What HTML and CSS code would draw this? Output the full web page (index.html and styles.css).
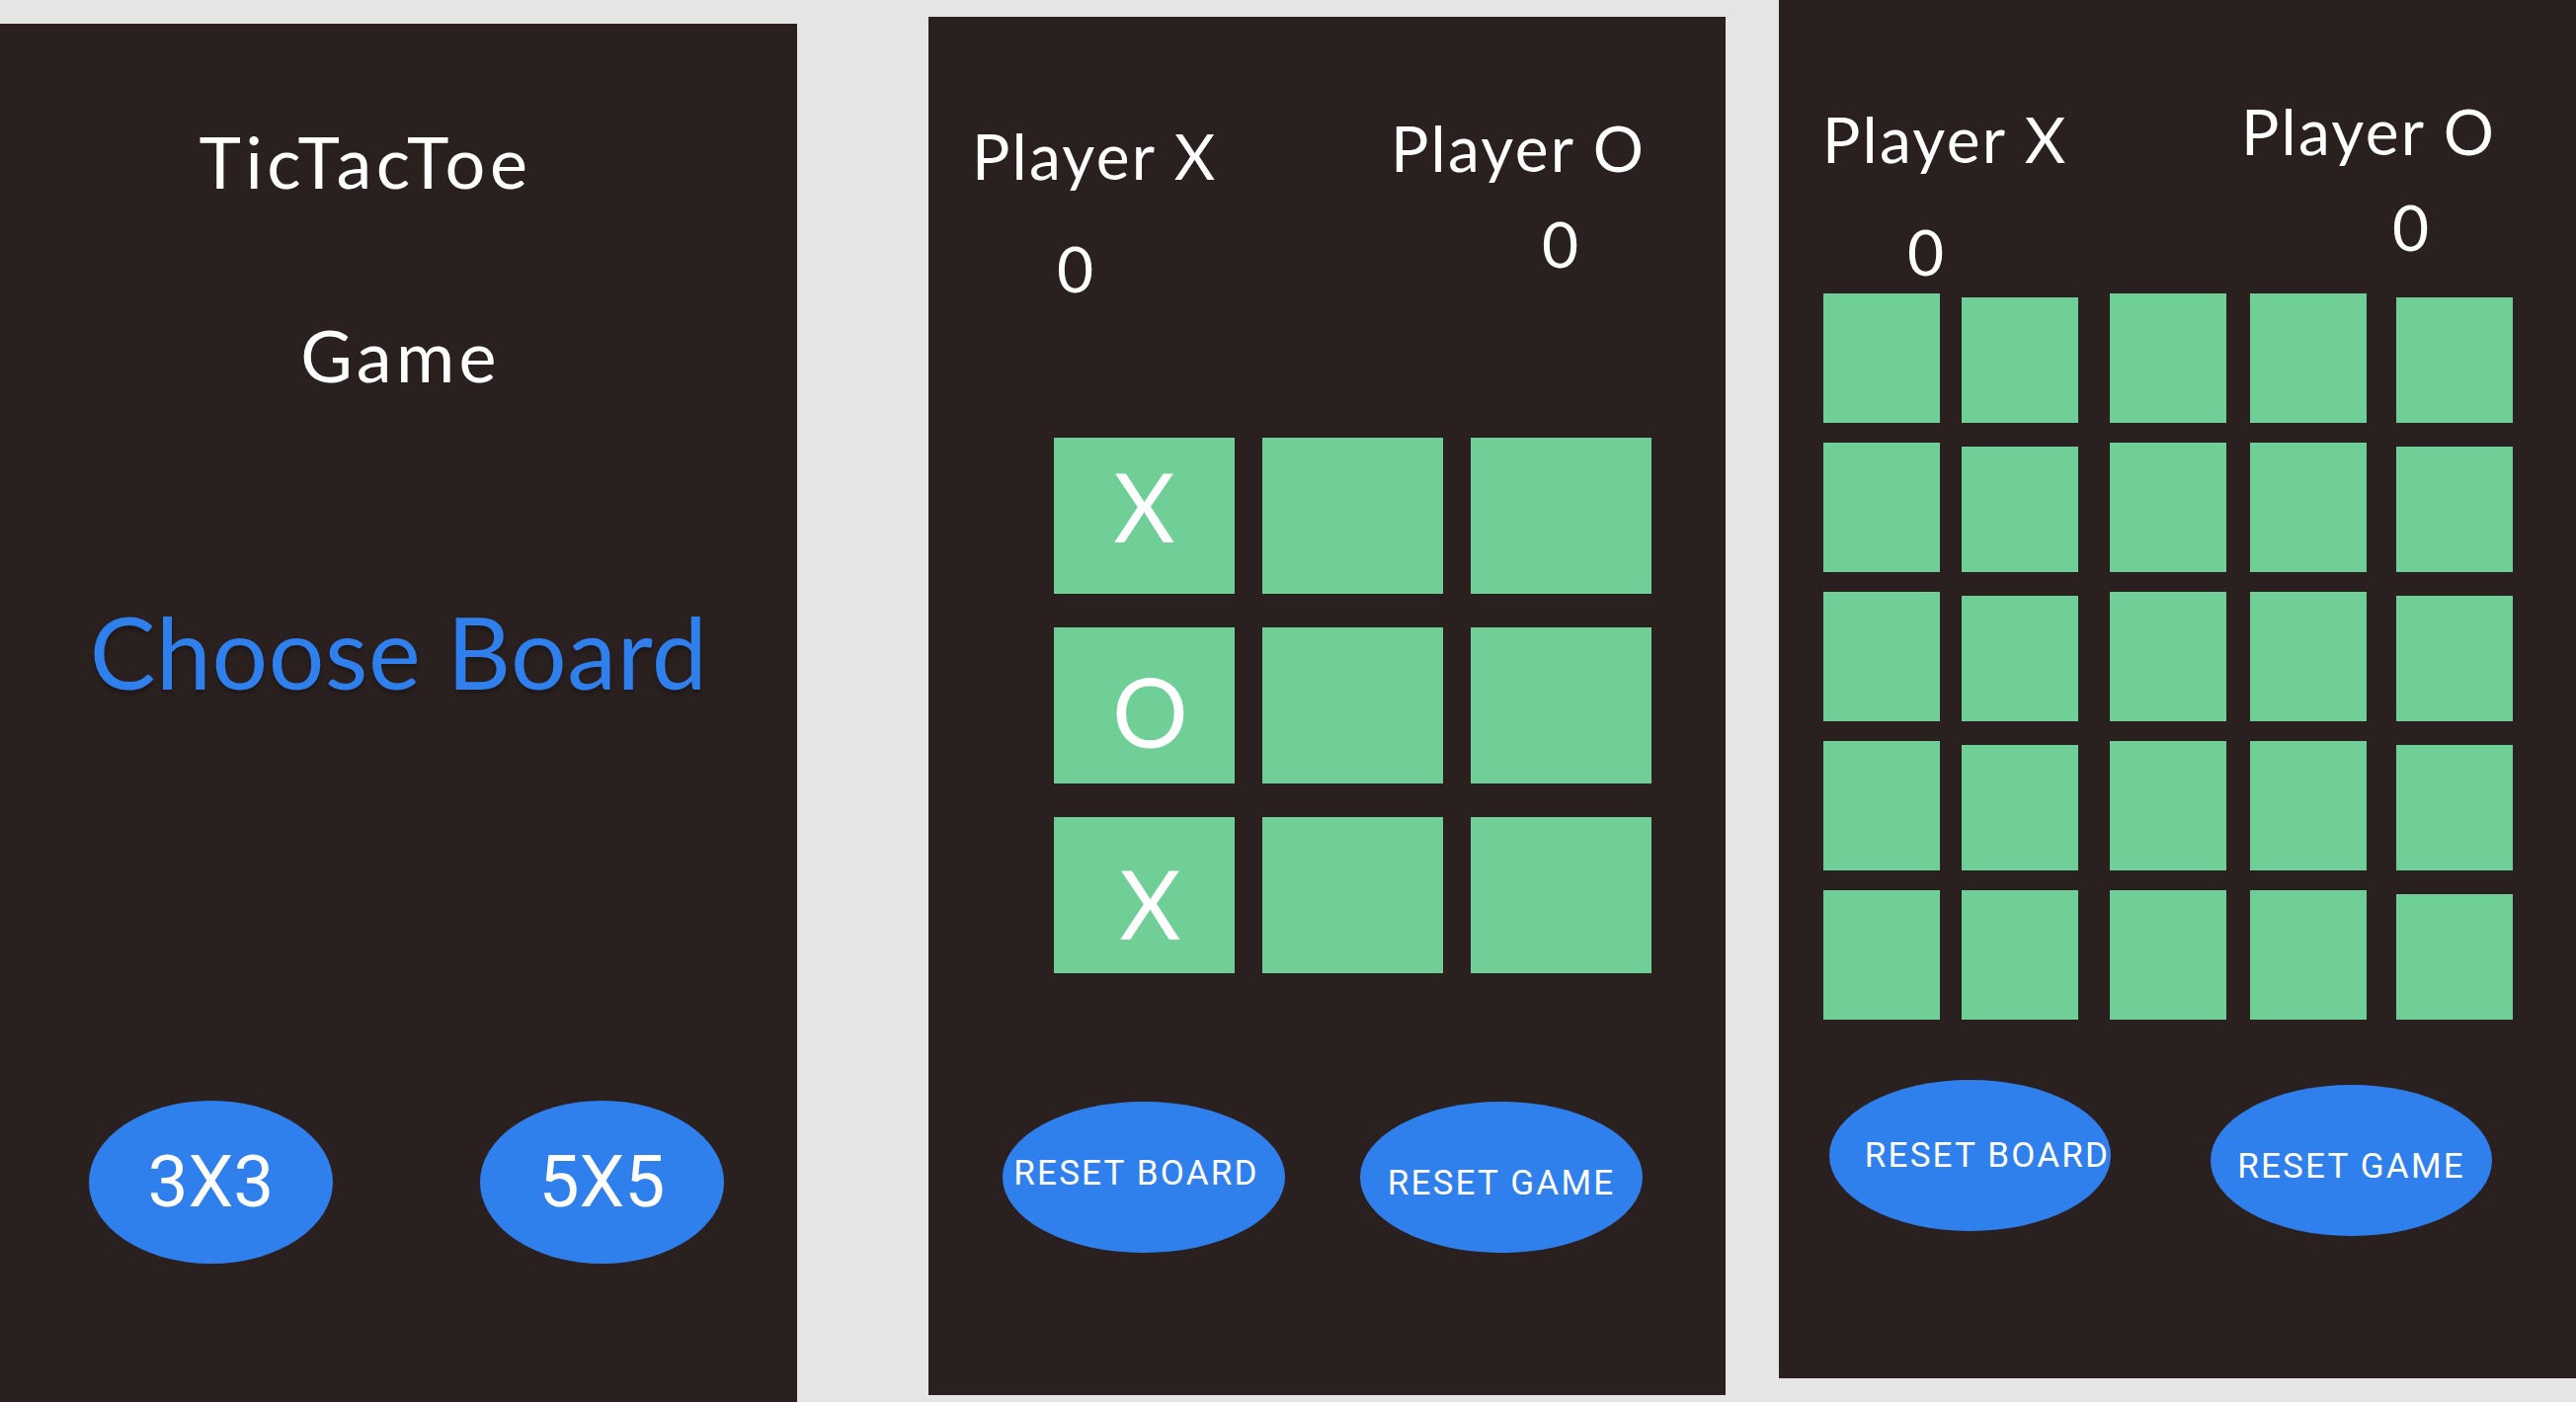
FILE: index.html
```html
<!DOCTYPE html>
<html lang="en">
<head>
<meta charset="utf-8">
<title>TicTacToe screens</title>
<link rel="stylesheet" href="styles.css">
</head>
<body>
<main class="screens">
  <section class="screen screen--menu">
    <h1 class="menu-title">TicTacToe</h1>
    <p class="menu-subtitle">Game</p>
    <h2 class="menu-choose">Choose Board</h2>
    <div class="menu-actions">
      <button class="pill pill--size">3X3</button>
      <button class="pill pill--size">5X5</button>
    </div>
  </section>

  <section class="screen screen--board3">
    <header class="scores">
      <div class="player player--x"><span class="player-name">Player X</span><span class="player-score">0</span></div>
      <div class="player player--o"><span class="player-name">Player O</span><span class="player-score">0</span></div>
    </header>
    <div class="grid grid--3">
      <div class="cell cell--mark-up">X</div>
      <div class="cell"></div>
      <div class="cell"></div>
      <div class="cell cell--mark-o">O</div>
      <div class="cell"></div>
      <div class="cell"></div>
      <div class="cell cell--mark-down">X</div>
      <div class="cell"></div>
      <div class="cell"></div>
    </div>
    <div class="actions actions--3">
      <button class="pill pill--reset label-left">RESET BOARD</button>
      <button class="pill pill--reset label-low">RESET GAME</button>
    </div>
  </section>

  <section class="screen screen--board5">
    <header class="scores">
      <div class="player player--x"><span class="player-name">Player X</span><span class="player-score">0</span></div>
      <div class="player player--o"><span class="player-name">Player O</span><span class="player-score">0</span></div>
    </header>
    <div class="grid grid--5">
      <div class="cell"></div><div class="cell cell--drop"></div><div class="cell"></div><div class="cell"></div><div class="cell cell--drop"></div>
      <div class="cell"></div><div class="cell cell--drop"></div><div class="cell"></div><div class="cell"></div><div class="cell cell--drop"></div>
      <div class="cell"></div><div class="cell cell--drop"></div><div class="cell"></div><div class="cell"></div><div class="cell cell--drop"></div>
      <div class="cell"></div><div class="cell cell--drop"></div><div class="cell"></div><div class="cell"></div><div class="cell cell--drop"></div>
      <div class="cell"></div><div class="cell"></div><div class="cell"></div><div class="cell"></div><div class="cell cell--drop"></div>
    </div>
    <div class="actions actions--5">
      <button class="pill pill--reset label-right">RESET BOARD</button>
      <button class="pill pill--reset pill--lower label-low">RESET GAME</button>
    </div>
  </section>
</main>
</body>
</html>
```

FILE: styles.css
```css
* { box-sizing: border-box; }

html, body { margin: 0; padding: 0; }

body {
  width: 2608px;
  height: 1419px;
  overflow: hidden;
  background: #e5e5e5;
  font-family: Lato, "Noto Sans", sans-serif;
}

.screens {
  display: flex;
  align-items: flex-start;
}

.screen {
  flex: none;
  width: 807px;
  height: 1395px;
  background: #2a2020;
  color: #ffffff;
  display: flex;
  flex-direction: column;
}

.screen--menu { margin-top: 24px; }
.screen--board3 { margin-top: 17px; margin-left: 133px; }
.screen--board5 { margin-top: 0; margin-left: 54px; }

/* ---------- menu screen ---------- */
.menu-title,
.menu-subtitle,
.menu-choose {
  margin: 0;
  font-weight: 400;
  line-height: 1;
  text-align: center;
  white-space: nowrap;
}

.menu-title {
  margin-top: 103px;
  padding-right: 67px;
  font-size: 72px;
  letter-spacing: 4.6px;
}

.menu-subtitle {
  margin-top: 124px;
  padding-left: 4px;
  font-size: 72px;
  letter-spacing: 4.3px;
}

.menu-choose {
  margin-top: 214px;
  font-size: 100px;
  letter-spacing: 0.6px;
  color: #2f80ed;
  text-shadow: 0 4px 4px rgba(0, 0, 0, 0.25);
}

.menu-actions {
  margin-top: 405px;
  padding-left: 90px;
  display: flex;
  gap: 149px;
}

/* ---------- pills ---------- */
.pill {
  flex: none;
  border: none;
  border-radius: 50%;
  background: #2f80ed;
  color: #ffffff;
  padding: 0;
  display: flex;
  align-items: center;
  justify-content: center;
  font-family: Roboto, "Liberation Sans", sans-serif;
  font-weight: 400;
  line-height: 1;
  white-space: nowrap;
}

.pill--size {
  width: 247px;
  height: 165px;
  font-size: 73px;
}

.pill--reset {
  width: 286px;
  height: 153px;
  font-size: 35px;
  letter-spacing: 2.2px;
}

.label-left { padding: 0 15px 8px 0; }
.label-low { padding-top: 12px; }
.label-right { padding-left: 35px; }
.pill--lower { margin-top: 5px; }

/* ---------- scores ---------- */
.scores {
  display: flex;
  align-items: flex-start;
  padding-left: 44px;
}

.player {
  display: flex;
  flex-direction: column;
  align-items: flex-start;
}

.player--x { width: 424px; margin-top: 109px; }
.player--o { margin-top: 101px; }

.player-name,
.player-score {
  font-size: 64px;
  line-height: 1;
  white-space: nowrap;
}

.player-name { letter-spacing: 2.3px; }

.player--x .player-score { margin: 50px 0 0 86px; }
.player--o .player-score { margin: 33px 0 0 153px; }

/* ---------- grids ---------- */
.grid { display: grid; }

.grid--3 {
  grid-template-columns: repeat(3, 183px);
  grid-auto-rows: 158px;
  column-gap: 28px;
  row-gap: 34px;
  margin: 139px 0 0 127px;
}

.grid--5 {
  grid-template-columns: 140px 150px 142px 148px 118px;
  grid-auto-rows: 131px;
  row-gap: 20px;
  margin: 10px 0 0 45px;
}

.grid--5 .cell { width: 118px; }

.cell {
  background: #6fcf97;
  display: flex;
  align-items: center;
  justify-content: center;
  font-size: 96px;
  line-height: 1;
  color: #ffffff;
}

.cell--drop { margin-top: 4px; }
.cell--mark-up { padding-bottom: 20px; }
.cell--mark-o { padding: 11px 0 0 12px; }
.cell--mark-down { padding: 16px 0 0 12px; }

/* ---------- action rows ---------- */
.actions {
  display: flex;
  align-items: flex-start;
}

.actions--3 {
  margin-top: 130px;
  padding-left: 75px;
  gap: 76px;
}

.actions--5 {
  margin-top: 61px;
  padding-left: 51px;
  gap: 101px;
}

.actions--5 .pill--reset { width: 285px; }
```
